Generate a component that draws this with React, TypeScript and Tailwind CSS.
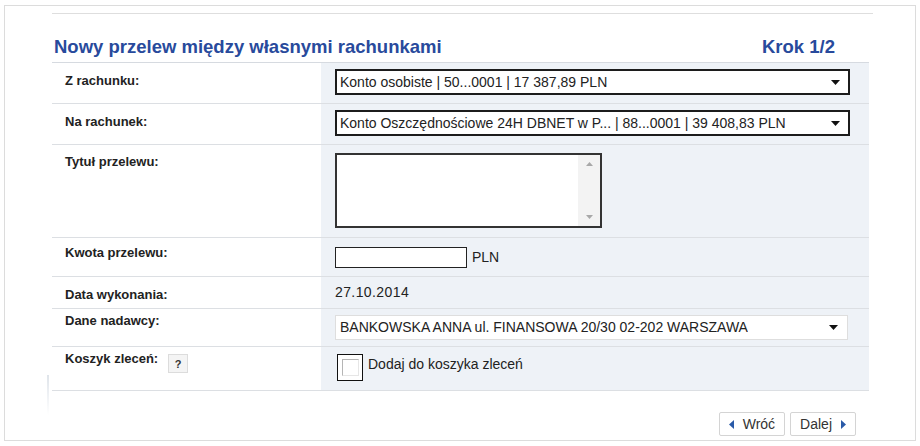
const font = { fontFamily: '"Liberation Sans", Arial, sans-serif' };

function Caret({ color = "#111" }: { color?: string }) {
  return (
    <svg width="9" height="5" viewBox="0 0 9 5" className="shrink-0">
      <path d="M0 0h9L4.5 5z" fill={color} />
    </svg>
  );
}

function Select({ value, dark = true }: { value: string; dark?: boolean }) {
  return (
    <div
      className={
        dark
          ? "flex h-[26px] w-[515px] items-center justify-between border-2 border-[#1c1c1c] bg-white pl-[3px] pr-[8px] text-[14px] text-[#222]"
          : "flex h-[25px] w-[513px] items-center justify-between border border-[#dedede] bg-white pl-[4px] pr-[9px] text-[14px] text-[#222]"
      }
    >
      <span className="truncate">{value}</span>
      <Caret />
    </div>
  );
}

function Row({
  label,
  labelPt,
  valuePad,
  children,
}: {
  label: React.ReactNode;
  labelPt: string;
  valuePad: string;
  children: React.ReactNode;
}) {
  return (
    <div className="flex border-b border-[#dcdfe3]">
      <div className={`w-[269px] shrink-0 pl-[13px] text-[13px] font-bold leading-[16px] text-[#222] ${labelPt}`}>{label}</div>
      <div className={`flex flex-1 items-start bg-[#eef2f7] pl-[14px] ${valuePad}`}>{children}</div>
    </div>
  );
}

export default function App() {
  return (
    <div className="h-[446px] w-[920px] bg-white pl-[4px] pt-[5px]" style={font}>
      <div className="relative h-[436px] w-[912px] border border-[#dcdcdc] bg-white">
        <div className="absolute left-[42px] top-[369px] h-[40px] w-[2px] bg-gradient-to-b from-[#dfe4ea] to-white" />
        <div className="ml-[47px] mt-[7px] w-[821px] border-t border-[#dedede]" />
        <div className="ml-[47px] w-[817px]">
          <div className="flex h-[48px] items-end justify-between pb-[5px] pl-[2px] pr-[34px] text-[18.5px] font-bold leading-[21px] text-[#284a9c]">
            <span>Nowy przelew między własnymi rachunkami</span>
            <span>Krok 1/2</span>
          </div>
          <div className="border-t border-[#d6dae0]">
            <Row label="Z rachunku:" labelPt="pt-[10px]" valuePad="pt-[6px] pb-[8px]">
              <Select value="Konto osobiste | 50...0001 | 17 387,89 PLN" />
            </Row>
            <Row label="Na rachunek:" labelPt="pt-[10px]" valuePad="pt-[6px] pb-[8px]">
              <Select value="Konto Oszczędnościowe 24H DBNET w P... | 88...0001 | 39 408,83 PLN" />
            </Row>
            <Row label="Tytuł przelewu:" labelPt="pt-[9px]" valuePad="pt-[8px] pb-[9px]">
              <div className="flex h-[75px] w-[267px] border-2 border-[#333] bg-white">
                <div className="flex-1" />
                <div className="flex w-[22px] flex-col items-center justify-between bg-[#f3f3f3] py-[7px]">
                  <svg width="7" height="4" viewBox="0 0 7 4">
                    <path d="M0 4L3.5 0 7 4z" fill="#a8a8a8" />
                  </svg>
                  <svg width="7" height="4" viewBox="0 0 7 4">
                    <path d="M0 0h7L3.5 4z" fill="#a8a8a8" />
                  </svg>
                </div>
              </div>
            </Row>
            <Row label="Kwota przelewu:" labelPt="pt-[7px]" valuePad="pt-[9px] pb-[8px] items-center">
              <div className="h-[21px] w-[132px] border border-[#222] bg-white" />
              <span className="ml-[5px] text-[14px] text-[#222]">PLN</span>
            </Row>
            <Row label="Data wykonania:" labelPt="pt-[10px]" valuePad="pt-[8px] pb-[8px]">
              <span className="text-[14px] leading-[15px] tracking-[0.4px] text-[#222]">27.10.2014</span>
            </Row>
            <Row label="Dane nadawcy:" labelPt="pt-[4px]" valuePad="pt-[6px] pb-[6px]">
              <Select dark={false} value="BANKOWSKA ANNA ul. FINANSOWA 20/30 02-202 WARSZAWA" />
            </Row>
            <Row
              label={
                <span className="flex items-start gap-[10px]">
                  <span>Koszyk zleceń:</span>
                  <span className="mt-[3px] flex h-[19px] w-[20px] items-center justify-center border border-[#dcdcdc] bg-[#f4f4f4] text-[11px] font-bold text-[#333]">
                    ?
                  </span>
                </span>
              }
              labelPt="pt-[4px]"
              valuePad="pt-[7px] pb-[9px] items-center"
            >
              <div className="ml-[2px] flex h-[27px] w-[26px] items-center justify-center border border-[#111] bg-white">
                <div className="h-[17px] w-[17px] border border-[#b5b5b5] border-r-[#e6e6e6] border-b-[#e6e6e6]" />
              </div>
              <span className="ml-[5px] text-[14px] text-[#222]">Dodaj do koszyka zleceń</span>
            </Row>
          </div>
          <div className="flex justify-end gap-[5px] pr-[13px] pt-[21px]">
            <button className="flex h-[24px] items-center gap-[9px] rounded-[2px] border border-[#d4d4d4] bg-white px-[9px] text-[14px] text-[#333]">
              <svg width="5" height="9" viewBox="0 0 5 9">
                <path d="M5 0v9L0 4.5z" fill="#2a5aa8" />
              </svg>
              Wróć
            </button>
            <button className="flex h-[24px] items-center gap-[9px] rounded-[2px] border border-[#d4d4d4] bg-white px-[9px] text-[14px] text-[#333]">
              Dalej
              <svg width="5" height="9" viewBox="0 0 5 9">
                <path d="M0 0v9L5 4.5z" fill="#2a5aa8" />
              </svg>
            </button>
          </div>
        </div>
      </div>
    </div>
  );
}
